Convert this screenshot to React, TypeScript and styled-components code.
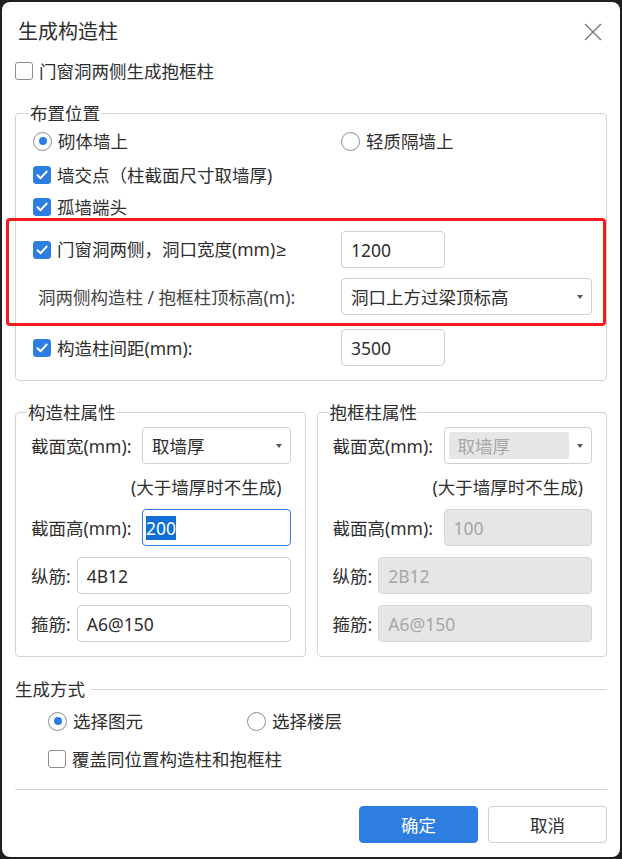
import React from 'react';
import styled, { createGlobalStyle } from 'styled-components';

const GlobalStyle = createGlobalStyle`
  html, body {
    margin: 0;
    padding: 0;
    background: #1f1f1f;
  }
  body {
    font-family: "Noto Sans", "Noto Sans CJK SC", sans-serif;
    color: #2e2e2e;
  }
`;

const Dialog = styled.div`
  margin: 2px;
  width: 618px;
  height: 855px;
  box-sizing: border-box;
  background: #fff;
  border-radius: 8px;
  padding: 0 13px;
  font-size: 17.5px;
  line-height: 22px;
`;

const TitleBar = styled.div`
  height: 56px;
  padding-top: 3px;
  box-sizing: border-box;
  display: flex;
  align-items: center;
  justify-content: space-between;
`;

const Title = styled.div`
  margin-left: 3px;
  font-size: 20px;
`;

const CloseButton = styled.div`
  width: 20px;
  height: 20px;
  margin-right: 4px;
  display: flex;
  align-items: center;
  justify-content: center;
`;

const Option = styled.label<{ $height?: number; $top?: number }>`
  display: flex;
  align-items: center;
  gap: 6px;
  height: ${p => p.$height ?? 26}px;
  margin-top: ${p => p.$top ?? 0}px;
  white-space: nowrap;
`;

const Box = styled.span<{ $checked: boolean }>`
  width: 18px;
  height: 18px;
  box-sizing: border-box;
  border-radius: 3px;
  flex: none;
  display: flex;
  align-items: center;
  justify-content: center;
  border: 1px solid ${p => (p.$checked ? '#2d7ee0' : '#8c8c8c')};
  background: ${p => (p.$checked ? '#2d7ee0' : '#fff')};
`;

const Circle = styled.span`
  width: 19px;
  height: 19px;
  box-sizing: border-box;
  border-radius: 50%;
  border: 1px solid #8c8c8c;
  flex: none;
  display: flex;
  align-items: center;
  justify-content: center;
`;

const Dot = styled.span`
  width: 8px;
  height: 8px;
  border-radius: 50%;
  background: #2d7ee0;
`;

const Group = styled.fieldset<{ $top: number }>`
  margin: ${p => p.$top}px 0 0;
  padding: 0 14px 14px 17px;
  border: 1px solid #d4d4d4;
  border-radius: 4px;
  min-width: 0;
`;

const Legend = styled.legend`
  margin-left: -4px;
  padding: 0 1px;
  line-height: 22px;
`;

const PlaceRow = styled.div<{ $height: number }>`
  display: grid;
  grid-template-columns: 308px 1fr;
  align-items: center;
  height: ${p => p.$height}px;
`;

const Highlight = styled.div`
  margin: -4px -14px 3px -27px;
  padding: 10px 11px 8px 24px;
  border: 3px solid #f5191c;
  border-radius: 4px;
  display: flex;
  flex-direction: column;
  gap: 10px;
`;

const SubLabel = styled.span`
  padding-left: 5px;
  color: #444;
  white-space: nowrap;
`;

const Symbol = styled.span`
  font-family: "Liberation Sans", sans-serif;
  margin-left: 1px;
`;

const Field = styled.div<{ $width?: number; $disabled?: boolean; $focused?: boolean }>`
  height: 37px;
  box-sizing: border-box;
  width: ${p => (p.$width ? `${p.$width}px` : 'auto')};
  flex: ${p => (p.$width ? 'none' : '1')};
  display: flex;
  align-items: center;
  padding: 0 ${p => (p.$focused ? 3 : 9)}px;
  border-radius: 4px;
  border: 1px solid ${p => (p.$focused ? '#2d7ee0' : p.$disabled ? '#d6d6d6' : '#d0d0d0')};
  background: ${p => (p.$disabled ? '#e6e6e6' : '#fff')};
  color: ${p => (p.$disabled ? '#a6a6a6' : '#2e2e2e')};
  white-space: nowrap;
`;

const SelectBox = styled.div<{ $width?: number }>`
  height: 37px;
  box-sizing: border-box;
  width: ${p => (p.$width ? `${p.$width}px` : 'auto')};
  flex: ${p => (p.$width ? 'none' : '1')};
  display: flex;
  align-items: stretch;
  border: 1px solid #d0d0d0;
  border-radius: 4px;
  background: #fff;
`;

const SelectValue = styled.div<{ $disabled?: boolean }>`
  flex: 1;
  display: flex;
  align-items: center;
  padding-left: 9px;
  margin: ${p => (p.$disabled ? '4px 0 4px 4px' : '0')};
  border-radius: 3px;
  background: ${p => (p.$disabled ? '#e6e6e6' : 'transparent')};
  color: ${p => (p.$disabled ? '#a6a6a6' : '#2e2e2e')};
  white-space: nowrap;
`;

const Arrow = styled.div`
  width: 22px;
  flex: none;
  display: flex;
  align-items: center;
  justify-content: center;
  &::after {
    content: '';
    border-left: 3.5px solid transparent;
    border-right: 3.5px solid transparent;
    border-top: 4px solid #555;
  }
`;

const Selected = styled.span`
  background: #0f6fd6;
  color: #fff;
  line-height: 24px;
`;

const Columns = styled.div`
  display: flex;
  gap: 11px;
`;

const PropGroup = styled(Group)`
  flex: 1;
  padding: 0 14px 14px 15px;
`;

const FormRow = styled.div<{ $top?: number }>`
  display: flex;
  align-items: center;
  gap: 6px;
  margin-top: ${p => p.$top ?? 0}px;
  white-space: nowrap;
`;

const FieldLabel = styled.span<{ $width?: number }>`
  width: ${p => (p.$width ? `${p.$width}px` : 'auto')};
  flex: none;
`;

const Note = styled.div`
  height: 45px;
  display: flex;
  align-items: center;
  justify-content: flex-end;
  padding-right: 9px;
`;

const SectionHead = styled.div`
  margin-top: 21px;
  display: flex;
  align-items: center;
  gap: 6px;
  height: 22px;
  &::after {
    content: '';
    flex: 1;
    height: 1px;
    background: #d4d4d4;
  }
`;

const ModeBlock = styled.div`
  padding-left: 33px;
  margin-top: 6px;
`;

const RadioPair = styled.div`
  display: grid;
  grid-template-columns: 199px auto;
  height: 30px;
  align-items: center;
`;

const Divider = styled.div`
  margin-top: 13px;
  height: 1px;
  background: #d4d4d4;
`;

const Buttons = styled.div`
  display: flex;
  justify-content: flex-end;
  gap: 10px;
  margin-top: 16px;
`;

const Button = styled.button<{ $primary?: boolean }>`
  width: 119px;
  height: 37px;
  border-radius: 4px;
  font-family: inherit;
  font-size: 17.5px;
  cursor: pointer;
  border: 1px solid ${p => (p.$primary ? '#2d7ee0' : '#d0d0d0')};
  background: ${p => (p.$primary ? '#2d7ee0' : '#fff')};
  color: ${p => (p.$primary ? '#fff' : '#2e2e2e')};
`;

const Check: React.FC<{ checked?: boolean; label: React.ReactNode; height?: number; top?: number }> = ({
  checked = false,
  label,
  height,
  top,
}) => (
  <Option $height={height} $top={top}>
    <Box $checked={checked}>
      {checked && (
        <svg width="14" height="14" viewBox="0 0 14 14">
          <path d="M2.5 7.2 L5.6 10.2 L11.6 3.6" fill="none" stroke="#fff" strokeWidth="2" strokeLinecap="round" strokeLinejoin="round" />
        </svg>
      )}
    </Box>
    <span>{label}</span>
  </Option>
);

const Radio: React.FC<{ checked?: boolean; label: string }> = ({ checked = false, label }) => (
  <Option>
    <Circle>{checked && <Dot />}</Circle>
    {label}
  </Option>
);

const App: React.FC = () => {
  return (
    <>
      <GlobalStyle />
      <Dialog>
        <TitleBar>
          <Title>生成构造柱</Title>
          <CloseButton>
            <svg width="18" height="18" viewBox="0 0 18 18">
              <path d="M1 1 L17 17 M17 1 L1 17" stroke="#777" strokeWidth="1.4" />
            </svg>
          </CloseButton>
        </TitleBar>

        <Check label="门窗洞两侧生成抱框柱" />

        <Group $top={18}>
          <Legend>布置位置</Legend>
          <PlaceRow $height={34}>
            <Radio checked label="砌体墙上" />
            <Radio label="轻质隔墙上" />
          </PlaceRow>
          <PlaceRow $height={34}>
            <Check checked label="墙交点（柱截面尺寸取墙厚)" />
          </PlaceRow>
          <PlaceRow $height={30}>
            <Check checked label="孤墙端头" />
          </PlaceRow>
          <Highlight>
            <PlaceRow $height={37}>
              <Check
                checked
                label={
                  <>
                    门窗洞两侧，洞口宽度(mm)<Symbol>≥</Symbol>
                  </>
                }
              />
              <Field $width={104}>1200</Field>
            </PlaceRow>
            <PlaceRow $height={37}>
              <SubLabel>洞两侧构造柱 / 抱框柱顶标高(m):</SubLabel>
              <SelectBox>
                <SelectValue>洞口上方过梁顶标高</SelectValue>
                <Arrow />
              </SelectBox>
            </PlaceRow>
          </Highlight>
          <PlaceRow $height={37}>
            <Check checked label="构造柱间距(mm):" />
            <Field $width={104}>3500</Field>
          </PlaceRow>
        </Group>

        <Columns>
          <PropGroup $top={20}>
            <Legend>构造柱属性</Legend>
            <FormRow $top={4}>
              <FieldLabel $width={105}>截面宽(mm):</FieldLabel>
              <SelectBox>
                <SelectValue>取墙厚</SelectValue>
                <Arrow />
              </SelectBox>
            </FormRow>
            <Note>(大于墙厚时不生成)</Note>
            <FormRow>
              <FieldLabel $width={105}>截面高(mm):</FieldLabel>
              <Field $focused>
                <Selected>200</Selected>
              </Field>
            </FormRow>
            <FormRow $top={11}>
              <FieldLabel>纵筋:</FieldLabel>
              <Field>4B12</Field>
            </FormRow>
            <FormRow $top={11}>
              <FieldLabel>箍筋:</FieldLabel>
              <Field>A6@150</Field>
            </FormRow>
          </PropGroup>

          <PropGroup $top={20}>
            <Legend>抱框柱属性</Legend>
            <FormRow $top={4}>
              <FieldLabel $width={105}>截面宽(mm):</FieldLabel>
              <SelectBox>
                <SelectValue $disabled>取墙厚</SelectValue>
                <Arrow />
              </SelectBox>
            </FormRow>
            <Note>(大于墙厚时不生成)</Note>
            <FormRow>
              <FieldLabel $width={105}>截面高(mm):</FieldLabel>
              <Field $disabled>100</Field>
            </FormRow>
            <FormRow $top={11}>
              <FieldLabel>纵筋:</FieldLabel>
              <Field $disabled>2B12</Field>
            </FormRow>
            <FormRow $top={11}>
              <FieldLabel>箍筋:</FieldLabel>
              <Field $disabled>A6@150</Field>
            </FormRow>
          </PropGroup>
        </Columns>

        <SectionHead>生成方式</SectionHead>
        <ModeBlock>
          <RadioPair>
            <Radio checked label="选择图元" />
            <Radio label="选择楼层" />
          </RadioPair>
          <Check label="覆盖同位置构造柱和抱框柱" height={34} top={6} />
        </ModeBlock>
        <Divider />
        <Buttons>
          <Button $primary>确定</Button>
          <Button>取消</Button>
        </Buttons>
      </Dialog>
    </>
  );
};

export default App;
